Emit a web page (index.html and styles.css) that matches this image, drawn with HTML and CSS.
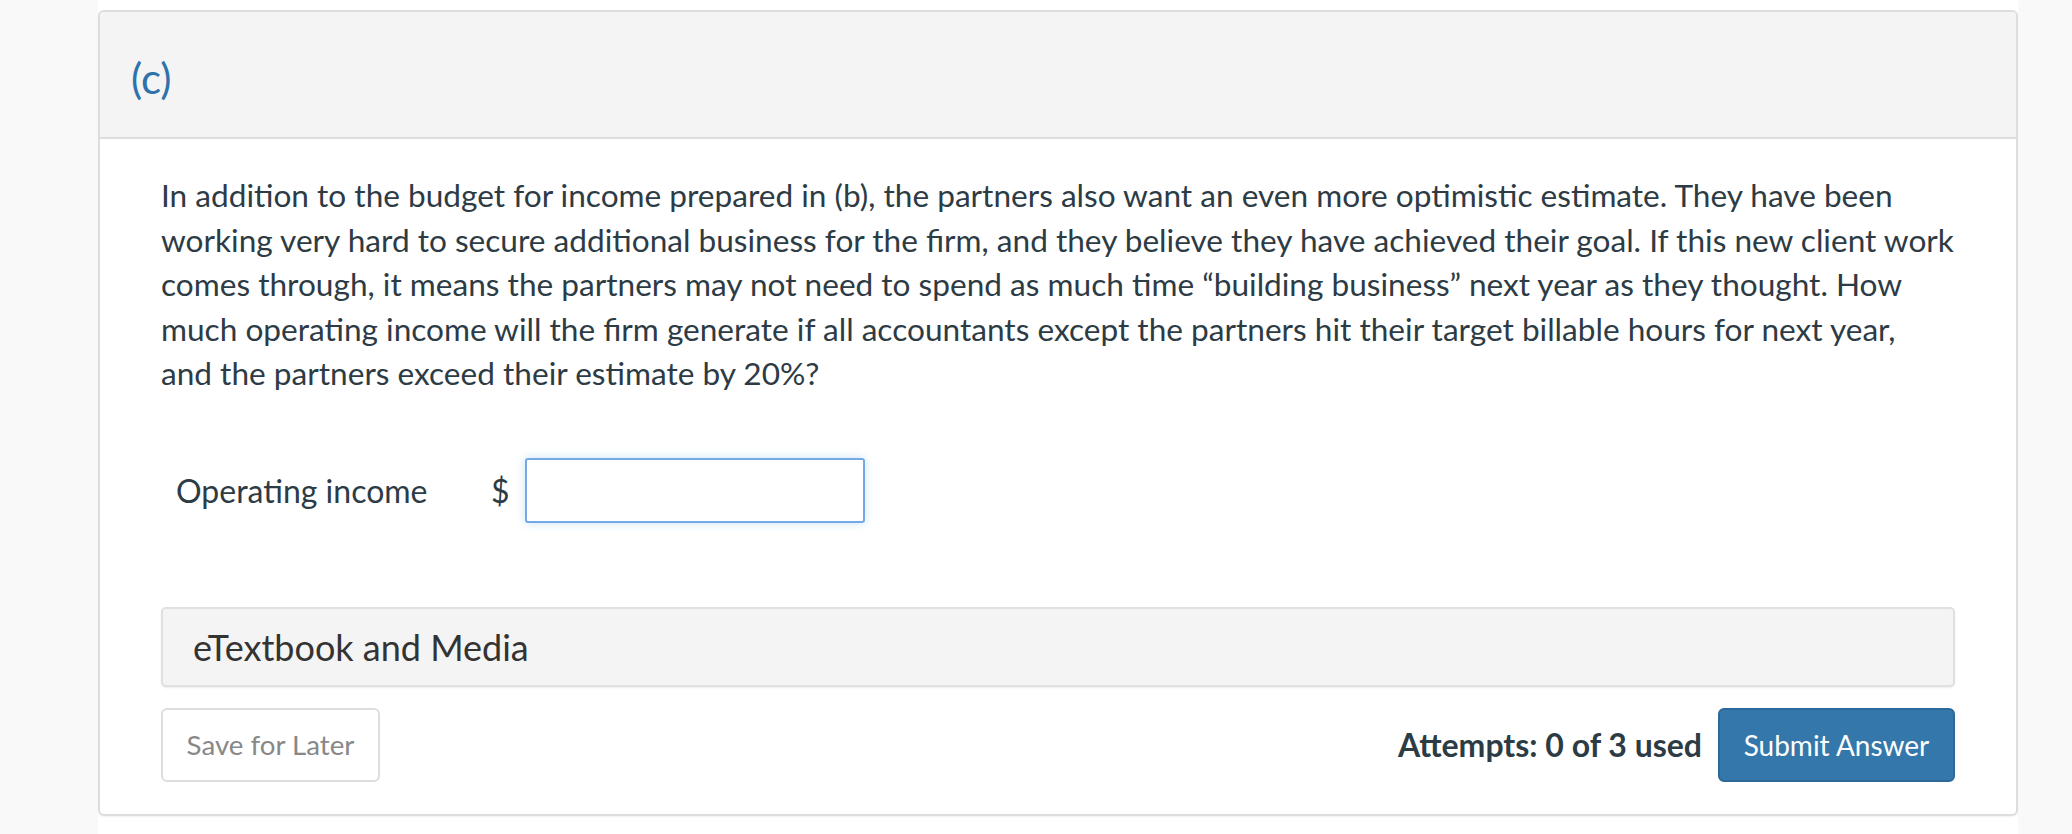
FILE: index.html
```html
<!DOCTYPE html>
<html lang="en">
<head>
<meta charset="utf-8">
<title>Question (c)</title>
<link rel="stylesheet" href="styles.css">
</head>
<body>
<div class="page">
  <div class="card">
    <div class="card-header"><span class="part-label">(c)</span></div>
    <div class="card-body">
      <p class="question">In addition to the budget for income prepared in (b), the partners also want an even more optimistic estimate. They have been working very hard to secure additional business for the firm, and they believe they have achieved their goal. If this new client work comes through, it means the partners may not need to spend as much time “building business” next year as they thought. How much operating income will the firm generate if all accountants except the partners hit their target billable hours for next year, and&nbsp;the partners exceed their estimate by 20%?</p>
      <div class="answer-row">
        <span class="answer-label">Operating income</span>
        <span class="currency">$</span>
        <input class="answer-input" type="text">
      </div>
      <div class="media-panel">eTextbook and Media</div>
      <div class="actions">
        <button class="btn btn-save">Save for Later</button>
        <div class="submit-group">
          <span class="attempts">Attempts: 0 of 3 used</span>
          <button class="btn btn-submit">Submit Answer</button>
        </div>
      </div>
    </div>
  </div>
</div>
</body>
</html>
```

FILE: styles.css
```css
html, body {
  margin: 0;
  padding: 0;
}
body {
  background: #f9f9f9;
  font-family: Lato, "Noto Sans", sans-serif;
  color: #2d3b45;
}
.page {
  margin-left: 98px;
  width: 1920px;
  height: 834px;
  background: #ffffff;
  padding-top: 10px;
  box-sizing: border-box;
}
.card {
  border: 2px solid #dddddd;
  border-radius: 6px;
  box-shadow: 0 1px 2px rgba(0,0,0,0.06);
  overflow: hidden;
  background: #fff;
}
.card-header {
  height: 127px;
  background: #f4f4f4;
  border-bottom: 2px solid #dddddd;
  display: flex;
  align-items: center;
  padding-left: 31px;
  padding-top: 6px;
  box-sizing: border-box;
}
.part-label {
  color: #2d72aa;
  font-size: 42px;
}
.card-body {
  padding: 34px 61px 32px 61px;
}
.question {
  margin: 0;
  font-size: 31.6px;
  line-height: 44.5px;
}
.answer-row {
  display: flex;
  align-items: center;
  margin-top: 62px;
  padding-left: 15px;
}
.answer-label {
  font-size: 32px;
  width: 250px;
  white-space: nowrap;
}
.currency {
  font-size: 32px;
  margin-left: 65px;
  margin-right: 15px;
}
.answer-input {
  width: 340px;
  height: 65px;
  box-sizing: border-box;
  border: 2px solid #74a9e6;
  border-radius: 3px;
  box-shadow: 0 0 10px rgba(102,175,233,0.35);
  outline: none;
  margin: 0;
  font-family: inherit;
}
.media-panel {
  margin-top: 84px;
  height: 80px;
  box-sizing: border-box;
  background: #f4f4f4;
  border: 2px solid #e0e0e0;
  border-radius: 5px;
  box-shadow: 0 1px 2px rgba(0,0,0,0.08);
  display: flex;
  align-items: center;
  padding-left: 30px;
  font-size: 36px;
  color: #333333;
}
.actions {
  margin-top: 21px;
  display: flex;
  justify-content: space-between;
  align-items: center;
}
.btn {
  height: 74px;
  box-sizing: border-box;
  border-radius: 6px;
  font-family: Lato, "Noto Sans", sans-serif;
  padding: 0;
  margin: 0;
}
.btn-save {
  width: 219px;
  background: #ffffff;
  border: 2px solid #dddddd;
  color: #888888;
  font-size: 27.7px;
}
.submit-group {
  display: flex;
  align-items: center;
}
.attempts {
  font-weight: bold;
  font-size: 32px;
  margin-right: 16px;
}
.btn-submit {
  width: 237px;
  background: #3477aa;
  border: 2px solid #2c6898;
  color: #ffffff;
  font-size: 28px;
}
```
